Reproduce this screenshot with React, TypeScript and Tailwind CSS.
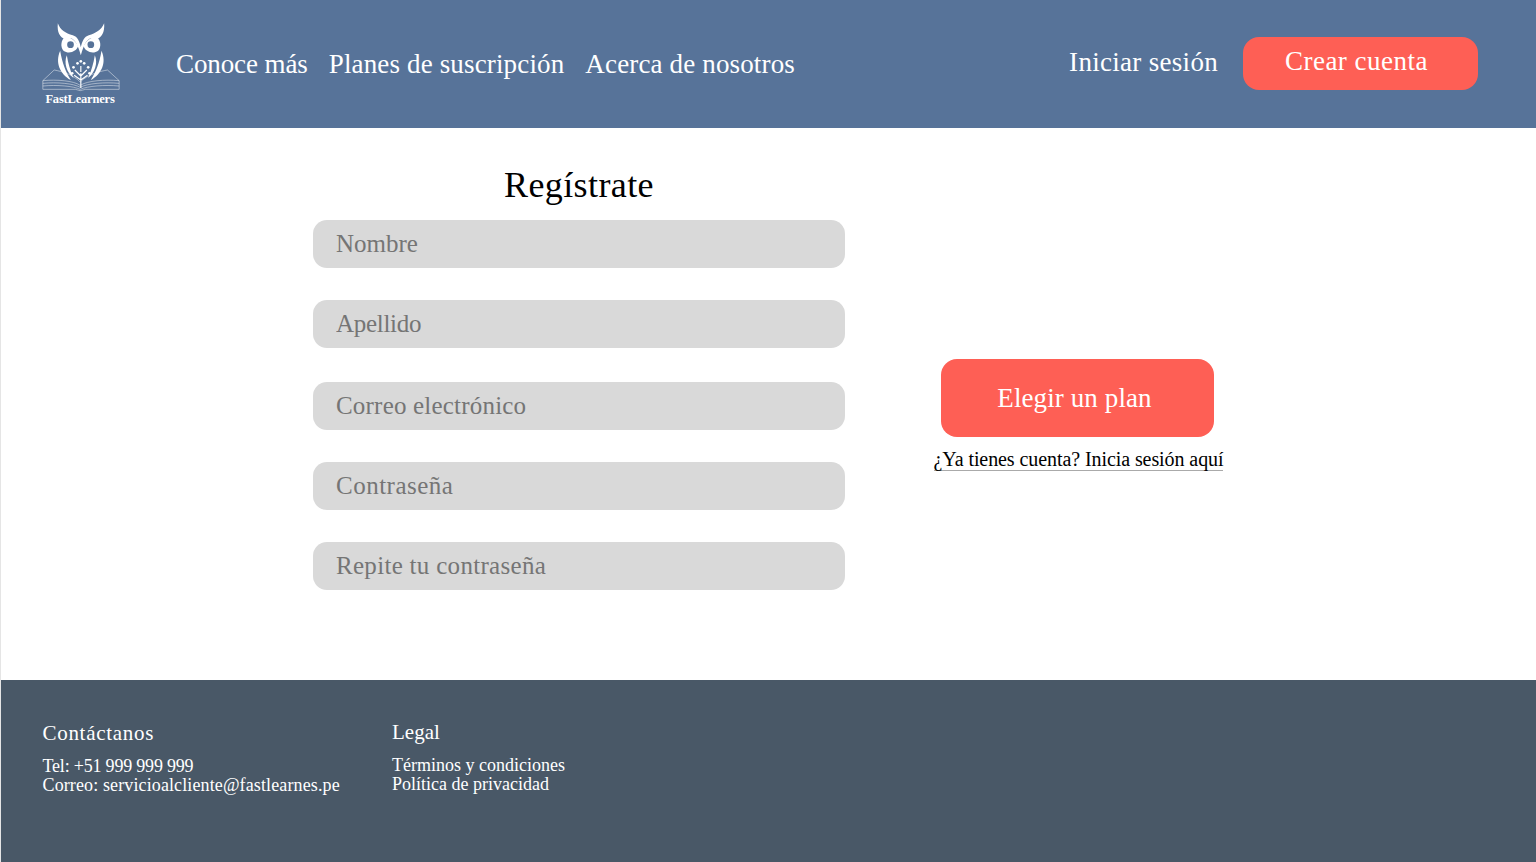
const serif = { fontFamily: '"Liberation Serif", serif' }

const OwlLogo = () => (
  <svg viewBox="60 30 245 222" className="w-[82px] h-[74px] block" fill="none">
    {/* ears and head */}
    <path
      d="M113 40C120 60 136 70 158 76C172 80 178 94 182 112C186 94 192 80 206 76C226 70 244 60 252 40C254 68 244 82 230 88C208 76 194 92 182 136C170 92 156 76 134 88C120 82 110 68 113 40Z"
      fill="#fff"
    />
    <path d="M134 82C122 90 120 112 130 122C146 134 170 124 174 108C164 90 150 80 134 82Z" fill="#fff" />
    <path d="M230 82C242 90 244 112 234 122C218 134 194 124 190 108C200 90 214 80 230 82Z" fill="#fff" />
    <circle cx="151" cy="104" r="10" fill="#577399" />
    <circle cx="212" cy="104" r="10" fill="#577399" />
    {/* wings */}
    <path d="M120 122C104 158 120 192 152 210C138 186 126 160 120 122Z" fill="#fff" />
    <path d="M140 136C130 160 140 188 160 204C150 182 144 160 140 136Z" fill="#fff" />
    <path d="M244 122C260 158 244 192 212 210C226 186 238 160 244 122Z" fill="#fff" />
    <path d="M224 136C234 160 224 188 204 204C214 182 220 160 224 136Z" fill="#fff" />
    {/* tree */}
    <path d="M182 234V190M182 198L164 180M182 198L200 180M182 210L162 196M182 210L202 196M182 186V168" stroke="#fff" strokeWidth="3.5" />
    <g fill="#fff">
      <circle cx="160" cy="172" r="4" />
      <circle cx="172" cy="160" r="4" />
      <circle cx="182" cy="154" r="4" />
      <circle cx="192" cy="160" r="4" />
      <circle cx="204" cy="172" r="4" />
      <circle cx="156" cy="190" r="4" />
      <circle cx="208" cy="190" r="4" />
    </g>
    {/* book */}
    <g stroke="#fff" strokeWidth="1.6" strokeOpacity="0.85">
      <path d="M68 212L102 180C125 184 160 194 180 216C202 194 238 184 262 180L297 212" />
      <path d="M68 212C110 208 160 212 180 226C202 212 254 208 297 212" />
      <path d="M68 220C110 216 160 220 180 232C202 220 254 216 297 220" />
      <path d="M68 228C110 224 160 228 180 238C202 228 254 224 297 228" />
      <path d="M68 212V238H166L180 242L196 238H297V212" />
    </g>
  </svg>
)

const fields = [
  { placeholder: 'Nombre', cls: 'mt-0' },
  { placeholder: 'Apellido', cls: 'mt-8 tracking-[-0.3px]' },
  { placeholder: 'Correo electrónico', cls: 'mt-[34px] tracking-[0.2px]' },
  { placeholder: 'Contraseña', cls: 'mt-8 tracking-[0.5px]' },
  { placeholder: 'Repite tu contraseña', cls: 'mt-8 tracking-[0.3px]' },
]

const App = () => {
  return (
    <div className="min-h-[862px] flex flex-col bg-white border-l border-[#e5e5e5]" style={serif}>
      <header className="h-[128px] bg-[#577399] flex text-white shrink-0">
        <div className="ml-[39px] mt-5 w-[82px] flex flex-col items-center">
          <OwlLogo />
          <span className="text-[12.5px] leading-[12px] font-bold tracking-[-0.2px] -mt-[1px] -ml-[2px]">FastLearners</span>
        </div>
        <nav className="ml-[54px] mt-[46px] flex gap-[21px] text-[27px] leading-[36px] tracking-[0.15px]">
          <a className="tracking-[-0.1px]">Conoce más</a>
          <a>Planes de suscripción</a>
          <a>Acerca de nosotros</a>
        </nav>
        <div className="ml-auto mr-[58px] mt-[37px] flex items-start gap-[25px] text-[27px]">
          <a className="leading-[50px] tracking-[0.3px]">Iniciar sesión</a>
          <button className="w-[235px] h-[53px] rounded-2xl bg-[#fe5f55] leading-[48px] pb-[5px] pr-[8px] tracking-[0.5px]">Crear cuenta</button>
        </div>
      </header>

      <main className="h-[552px] flex">
        <section className="ml-[312px] w-[532px] pt-[34px]">
          <h1 className="text-center text-[36px] leading-[46px] tracking-[0.4px] text-black mb-3">Regístrate</h1>
          {fields.map((f) => (
            <input
              key={f.placeholder}
              placeholder={f.placeholder}
              className={`${f.cls} block w-full h-12 rounded-[14px] bg-[#d9d9d9] px-[23px] text-[25px] placeholder:text-[#757575] outline-none`}
            />
          ))}
        </section>
        <section className="ml-[88px] w-[292px] pt-[231px] flex flex-col items-center">
          <button className="w-[273px] h-[78px] -ml-[3px] pr-[6px] rounded-2xl bg-[#fe5f55] text-white text-[27px] tracking-[0.1px]">
            Elegir un plan
          </button>
          <a className="mt-[11px] -ml-[1px] text-[20px] leading-[22px] tracking-[-0.08px] text-black border-b border-[#aaa] whitespace-nowrap">
            ¿Ya tienes cuenta? Inicia sesión aquí
          </a>
        </section>
      </main>

      <footer className="h-[182px] bg-[#495867] text-white flex pl-[41.5px] pt-[40px]">
        <div className="w-[349.5px]">
          <h2 className="text-[21px] leading-[26px] mb-[10px] tracking-[0.7px]">Contáctanos</h2>
          <p className="text-[18px] leading-[20px] tracking-[-0.2px]">Tel: +51 999 999 999</p>
          <p className="text-[18px] leading-[19px] tracking-[0.12px]">Correo: servicioalcliente@fastlearnes.pe</p>
        </div>
        <div>
          <h2 className="text-[21px] leading-[26px] mb-[10px] -mt-[1px]">Legal</h2>
          <p className="text-[18px] leading-[20px] mt-[1px]">Términos y condiciones</p>
          <p className="text-[18px] leading-[19px]">Política de privacidad</p>
        </div>
      </footer>
    </div>
  )
}

export default App
